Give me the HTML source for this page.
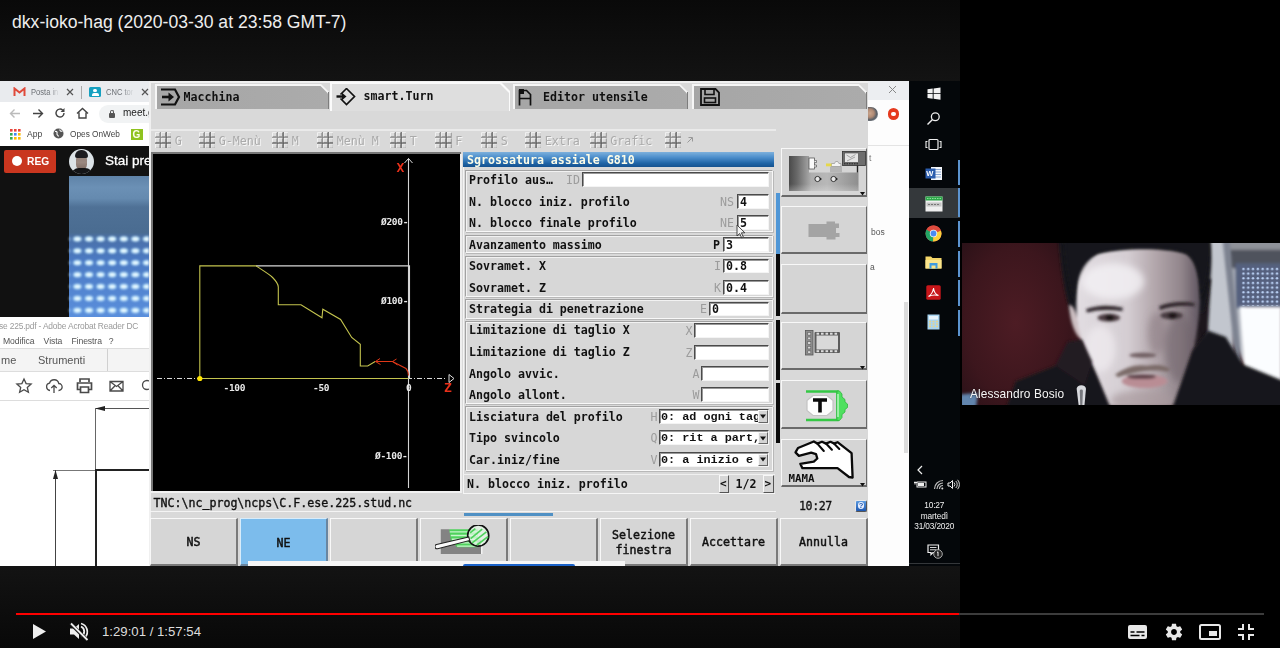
<!DOCTYPE html>
<html lang="it">
<head>
<meta charset="utf-8">
<title>dkx-ioko-hag (2020-03-30 at 23:58 GMT-7)</title>
<style>
*{box-sizing:border-box;margin:0;padding:0}
html,body{width:1280px;height:648px;overflow:hidden;background:#000}
body{position:relative;font-family:"Liberation Sans",sans-serif;color:#fff}
.abs{position:absolute}
#left{left:0;top:0;width:960px;height:648px;background:#121212}
#share{left:0;top:81px;width:960px;height:485.500px;overflow:hidden;background:#fff;filter:blur(.35px)}
.mono{font-family:"DejaVu Sans Mono","Liberation Mono",monospace;font-weight:bold;font-size:11.62px;color:#111;white-space:pre;line-height:14px}
.sans{font-family:"Liberation Sans",sans-serif;white-space:pre}
/* chrome */
#ctabs{left:0;top:0;width:149px;height:21px;background:#e9ebee}
#ctool{left:0;top:21px;width:149px;height:23px;background:#fff}
#cbook{left:0;top:44px;width:149px;height:21px;background:#fff}
#meet{left:0;top:65px;width:149px;height:171px;background:#111}
#acro{left:0;top:236px;width:149px;height:249px;background:#fff}
/* CNC */
#cnc{left:149px;top:0;width:719px;height:485px;background:#d9d9d9;border-left:2px solid #eee;border-top:2px solid #eee}
.tab{position:absolute;top:4px;height:24px;background:#a9a9a9;border-top:1px solid #f4f4f4;border-left:1px solid #f4f4f4;border-right:1px solid #777;border-radius:2px 8px 0 0}
.tab.act{background:#dedede;top:2px;height:27px;border-top:2px solid #fafafa;border-left:2px solid #fafafa}
.grp{position:absolute;left:466px;width:307px;border:1px solid #9a9a9a;border-right-color:#f6f6f6;border-bottom-color:#f6f6f6;box-shadow:inset 1px 1px 0 #f0f0f0}
.lbl{position:absolute;left:469px}
.inp{position:absolute;background:#fff;border:1px solid #555;border-right-color:#eee;border-bottom-color:#eee;height:15px;padding-left:3px}
.pl{position:absolute;color:#999;font-weight:normal}
.sk{position:absolute;top:437px;height:48px;width:88px;background:#d6d6d6;border:1px solid #f8f8f8;border-right:2px solid #888;border-bottom:2px solid #888;display:flex;align-items:center;justify-content:center;text-align:center}
.rb{position:absolute;left:781px;width:86px;background:#d6d6d6;border:1px solid #f8f8f8;border-right:2px solid #777;border-bottom:2px solid #777}
</style>
</head>
<body>
<div id="left" class="abs"></div>
<div id="share" class="abs">
<div id="ctabs" class="abs"></div><div id="ctool" class="abs"></div><div id="cbook" class="abs"></div>
<svg class="abs" style="left:13px;top:6px" width="13" height="10" viewBox="0 0 13 10"><path d="M1.500 9V1.500L6.500 5.500L11.500 1.500V9" fill="none" stroke="#e04a3a" stroke-width="2"/></svg>
<div class="abs sans" style="left:31px;top:5px;font-size:8.600px;line-height:12px;color:#6a6e73;transform:scaleX(.88);transform-origin:0 0">Posta in</div>
<div class="abs" style="left:48px;top:2px;width:12px;height:18px;background:linear-gradient(90deg,rgba(233,235,238,0),#e9ebee)"></div>
<svg class="abs" style="left:66px;top:7px" width="8" height="8" viewBox="0 0 8 8"><path d="M1 1L7 7M7 1L1 7" stroke="#555" stroke-width="1.200"/></svg>
<div class="abs" style="left:81px;top:5px;width:1px;height:13px;background:#aaa"></div>
<div class="abs" style="left:89px;top:6px;width:12px;height:10px;background:#16a0c0;border-radius:1.500px"></div>
<div class="abs" style="left:93px;top:8px;width:4px;height:3px;background:#fff;border-radius:2px"></div>
<div class="abs" style="left:91.500px;top:12px;width:7px;height:2.500px;background:#fff;border-radius:2px 2px 0 0"></div>
<div class="abs sans" style="left:106px;top:5px;font-size:8.600px;line-height:12px;color:#6a6e73;transform:scaleX(.88);transform-origin:0 0">CNC tor</div>
<div class="abs" style="left:122px;top:2px;width:12px;height:18px;background:linear-gradient(90deg,rgba(233,235,238,0),#e9ebee)"></div>
<svg class="abs" style="left:141px;top:7px" width="8" height="8" viewBox="0 0 8 8"><path d="M1 1L7 7M7 1L1 7" stroke="#555" stroke-width="1.200"/></svg>
<svg class="abs" style="left:9px;top:27px" width="12" height="11" viewBox="0 0 12 11"><path d="M11 5.500H2M5.500 1.500L1.500 5.500L5.500 9.500" fill="none" stroke="#bbb" stroke-width="1.400"/></svg>
<svg class="abs" style="left:32px;top:27px" width="12" height="11" viewBox="0 0 12 11"><path d="M1 5.500H10M6.500 1.500L10.500 5.500L6.500 9.500" fill="none" stroke="#444" stroke-width="1.400"/></svg>
<svg class="abs" style="left:54px;top:26px" width="12" height="12" viewBox="0 0 12 12"><path d="M10 6A4 4 0 1 1 8.800 3.200" fill="none" stroke="#444" stroke-width="1.400"/><path d="M10.500 1v4h-4z" fill="#444"/></svg>
<svg class="abs" style="left:76px;top:26px" width="13" height="12" viewBox="0 0 13 12"><path d="M1 6.500L6.500 1.500L12 6.500M3 5.500V11H10V5.500" fill="none" stroke="#444" stroke-width="1.400"/></svg>
<div class="abs" style="left:99px;top:24px;width:60px;height:18px;background:#f1f3f4;border-radius:9px"></div>
<div class="abs" style="left:108.500px;top:32px;width:6px;height:5px;background:#555;border-radius:1px"></div>
<div class="abs" style="left:109.500px;top:28.500px;width:4px;height:5px;border:1px solid #555;border-bottom:0;border-radius:2px 2px 0 0"></div>
<div class="abs sans" style="left:123px;top:26px;font-size:10px;line-height:12px;color:#222">meet.g</div>
<svg class="abs" style="left:10px;top:48px" width="11" height="11" viewBox="0 0 11 11"><g><rect x="0" y="0" width="2.600" height="2.600" fill="#e8453c"/><rect x="4" y="0" width="2.600" height="2.600" fill="#e8453c"/><rect x="8" y="0" width="2.600" height="2.600" fill="#e8453c"/><rect x="0" y="4" width="2.600" height="2.600" fill="#34a853"/><rect x="4" y="4" width="2.600" height="2.600" fill="#4285f4"/><rect x="8" y="4" width="2.600" height="2.600" fill="#fbbc05"/><rect x="0" y="8" width="2.600" height="2.600" fill="#34a853"/><rect x="4" y="8" width="2.600" height="2.600" fill="#fbbc05"/><rect x="8" y="8" width="2.600" height="2.600" fill="#fbbc05"/></g></svg>
<div class="abs sans" style="left:27px;top:47px;font-size:9.200px;line-height:12px;color:#444;transform:scaleX(.93);transform-origin:0 0">App</div>
<svg class="abs" style="left:53px;top:47px" width="11" height="11" viewBox="0 0 11 11"><circle cx="5.500" cy="5.500" r="5" fill="#555"/><path d="M2 3.500c1.500-.5 2.500.5 2 2s1 1.500 1.500 3M7 1.500c-.5 1.500 1 2 2.500 1.500" stroke="#fff" stroke-width="1.100" fill="none"/></svg>
<div class="abs sans" style="left:70px;top:47px;font-size:9.200px;line-height:12px;color:#444;transform:scaleX(.9);transform-origin:0 0">Opes OnWeb</div>
<div class="abs" style="left:131px;top:48px;width:12px;height:11px;background:#8fc31f"></div>
<div class="abs sans" style="left:132.500px;top:47.500px;font-size:10px;line-height:12px;color:#ffe;font-weight:bold">G</div>

<div id="meet" class="abs"></div>
<div class="abs" style="left:4px;top:69px;width:52px;height:23px;background:#c9361f;border-radius:2px"></div>
<div class="abs" style="left:12px;top:75px;width:10px;height:10px;background:#fff;border-radius:5px"></div>
<div class="abs sans" style="left:27px;top:74px;font-size:11px;line-height:13px;font-weight:bold;color:#fff;transform:scaleX(.93);transform-origin:0 0">REG</div>
<div class="abs" style="left:68.500px;top:67.500px;width:25.500px;height:25.500px;border-radius:13px;background:#dce3e7;overflow:hidden;filter:blur(.3px)"><div class="abs" style="left:7.500px;top:6px;width:10.500px;height:15px;border-radius:5px 5px 6px 6px;background:linear-gradient(#8f7f78,#9a8880 50%,#7c6a62)"></div><div class="abs" style="left:6.200px;top:1.500px;width:13.500px;height:7.500px;border-radius:6px 6px 2px 2px;background:#1b1c20"></div><div class="abs" style="left:2px;top:19.500px;width:22px;height:8px;border-radius:8px 8px 0 0;background:#141416"></div></div>
<div class="abs sans" style="left:105px;top:72px;font-size:13.500px;line-height:16px;color:#fff;-webkit-text-stroke:.3px #fff">Stai pre</div>
<div class="abs" style="left:69px;top:95px;width:80px;height:140.500px;background:linear-gradient(#5f83a8 0,#6b90b5 8%,#658aaf 16%,#4f7196 22%,#4a6c91 40%,#4a70a8 44%,#4b7ac4 60%,#5a8fdc 100%)"></div>
<svg class="abs" style="left:69px;top:150px;filter:blur(.9px)" width="80" height="86" viewBox="0 0 80 86"><defs><pattern id="dots" x="2.600" y="2" width="11.600" height="11.900" patternUnits="userSpaceOnUse"><ellipse cx="5.800" cy="6" rx="4.200" ry="2.700" fill="#c4ecff"/><ellipse cx="5.800" cy="6" rx="2.400" ry="1.600" fill="#f2fcff"/></pattern></defs><rect x="0" y="2" width="80" height="83.300" fill="url(#dots)"/></svg>

<div id="acro" class="abs"></div>
<div class="abs sans" style="left:-1px;top:239px;font-size:9.200px;line-height:12px;color:#9a9a9a;letter-spacing:-.2px;transform:scaleX(.915);transform-origin:0 0">se 225.pdf - Adobe Acrobat Reader DC</div>
<div class="abs sans" style="left:3px;top:254px;font-size:9px;line-height:12px;color:#555;letter-spacing:-.1px;transform:scaleX(.96);transform-origin:0 0">Modifica    Vista    Finestra   ?</div>
<div class="abs" style="left:0;top:267px;width:149px;height:24px;background:#f4f4f4;border-top:1px solid #ddd;border-bottom:1px solid #ddd"></div>
<div class="abs" style="left:107px;top:268px;width:1px;height:22px;background:#d0d0d0"></div>
<div class="abs sans" style="left:1px;top:272px;font-size:11px;line-height:14px;color:#555">me</div>
<div class="abs sans" style="left:38px;top:272px;font-size:11px;line-height:14px;color:#555">Strumenti</div>
<svg class="abs" style="left:14px;top:294px" width="135" height="22" viewBox="0 0 135 22"><g fill="none" stroke="#4a4a4a" stroke-width="1.300"><path d="M10 4l2.100 4.600 5 .5-3.800 3.300 1.100 4.900L10 14.800 5.600 17.300l1.100-4.900L2.900 9.100l5-.5z"/><path d="M36 15.500a3.700 3.700 0 0 1-.5-7.300 4.800 4.800 0 0 1 9.300.3 3.500 3.500 0 0 1-.3 7M40 18v-7.500M37.300 13L40 10.300 42.700 13"/><path d="M66 7V4h9v3M66 14.500h-2.500V8h14v6.500H75M66.500 12h8v5.500h-8z" stroke-width="1.700"/><path d="M96 6.500h13v9.500H96zM96 6.500l6.500 5 6.500-5M96 16l4.800-5M109 16l-4.800-5"/><circle cx="133" cy="10" r="4.500"/></g></svg>
<div class="abs" style="left:0;top:319px;width:149px;height:1px;background:#ddd"></div>
<div class="abs" style="left:95px;top:327px;width:54px;height:1px;background:#555"></div>
<svg class="abs" style="left:95px;top:324px" width="12" height="7" viewBox="0 0 12 7"><path d="M0 3.500L10 1V6z" fill="#222"/></svg>
<div class="abs" style="left:95px;top:327px;width:1px;height:62px;background:#666"></div>
<div class="abs" style="left:53px;top:388.500px;width:42px;height:1px;background:#777"></div>
<div class="abs" style="left:95px;top:388px;width:54px;height:2px;background:#222"></div>
<div class="abs" style="left:94.500px;top:389px;width:2px;height:96px;background:#222"></div>
<div class="abs" style="left:55px;top:389px;width:1px;height:96px;background:#444"></div>
<svg class="abs" style="left:52px;top:389px" width="7" height="12" viewBox="0 0 7 12"><path d="M3.500 0L6 9H1z" fill="#222"/></svg>

<div class="abs" style="left:149px;top:0px;width:719px;height:485px;background:#d9d9d9;border-left:2px solid #f0f0f0;border-top:2px solid #f0f0f0"></div>
<div class="abs" style="left:155px;top:3px;width:174px;height:25px;background:#f6f6f6;clip-path:polygon(0 0,calc(100% - 8px) 0,100% 8px,100% 100%,0 100%)"></div>
<div class="abs" style="left:156.5px;top:4.5px;width:171.5px;height:23.5px;background:linear-gradient(90deg,#a6a6a6,#ababab);clip-path:polygon(0 0,calc(100% - 8px) 0,100% 8px,100% 100%,0 100%)"></div>
<div class="abs" style="left:327.5px;top:11px;width:1px;height:17px;background:#7d7d7d"></div>
<div class="abs" style="left:330px;top:1px;width:180px;height:29px;background:#fbfbfb;clip-path:polygon(0 0,calc(100% - 9px) 0,100% 9px,100% 100%,0 100%)"></div>
<div class="abs" style="left:332px;top:3px;width:177px;height:27px;background:#dedede;clip-path:polygon(0 0,calc(100% - 9px) 0,100% 9px,100% 100%,0 100%)"></div>
<div class="abs" style="left:513px;top:3px;width:175px;height:25px;background:#f6f6f6;clip-path:polygon(0 0,calc(100% - 8px) 0,100% 8px,100% 100%,0 100%)"></div>
<div class="abs" style="left:514.5px;top:4.5px;width:172.5px;height:23.5px;background:linear-gradient(90deg,#a6a6a6,#ababab);clip-path:polygon(0 0,calc(100% - 8px) 0,100% 8px,100% 100%,0 100%)"></div>
<div class="abs" style="left:686.5px;top:11px;width:1px;height:17px;background:#7d7d7d"></div>
<div class="abs" style="left:692px;top:3px;width:175px;height:25px;background:#f6f6f6;clip-path:polygon(0 0,calc(100% - 8px) 0,100% 8px,100% 100%,0 100%)"></div>
<div class="abs" style="left:693.5px;top:4.5px;width:172.5px;height:23.5px;background:linear-gradient(90deg,#a6a6a6,#ababab);clip-path:polygon(0 0,calc(100% - 8px) 0,100% 8px,100% 100%,0 100%)"></div>
<div class="abs" style="left:865.5px;top:11px;width:1px;height:17px;background:#7d7d7d"></div>
<svg class="abs" style="left:159px;top:6px;" width="23" height="20" viewBox="0 0 23 20"><path d="M2 2.500h14l4 7.500-4 7.500H2" fill="none" stroke="#111" stroke-width="2.200"/><path d="M3 10h8" stroke="#111" stroke-width="2.600"/><path d="M9.500 5.500L15 10l-5.500 4.500z" fill="#111"/></svg>
<div class="abs mono" style="left:183.5px;top:9px;">Macchina</div>
<svg class="abs" style="left:335px;top:5px;" width="22" height="22" viewBox="0 0 22 22"><path d="M11.500 2.500L19.500 10.500L11.500 18.500L5.500 12.500M5.500 8.500L11.500 2.500" fill="none" stroke="#111" stroke-width="1.700"/><path d="M1.500 10.500h7" stroke="#111" stroke-width="2.400"/><path d="M7 6.800L11.500 10.500L7 14.200z" fill="#111"/></svg>
<div class="abs mono" style="left:363.5px;top:8px;">smart.Turn</div>
<svg class="abs" style="left:517px;top:6px;" width="16" height="20" viewBox="0 0 16 20"><path d="M2.500 18.500V3.500h7l4 4v11M2.500 11.500h11" fill="none" stroke="#111" stroke-width="1.700"/><path d="M2 2h5v5H2z" fill="#111"/></svg>
<div class="abs mono" style="left:543px;top:9px;">Editor utensile</div>
<svg class="abs" style="left:699px;top:6px;" width="22" height="20" viewBox="0 0 22 20"><path d="M2 2h14.500l3.500 3.500V18H2z" fill="none" stroke="#111" stroke-width="1.800"/><path d="M6 2.500v5h9v-5" fill="none" stroke="#111" stroke-width="1.600"/><rect x="5.500" y="11" width="11" height="4.500" fill="none" stroke="#111" stroke-width="1.600"/></svg>
<div class="abs" style="left:151px;top:48px;width:625px;height:1.5px;background:#eaeaea"></div>
<svg width="0" height="0" style="position:absolute"><defs><g id="grid"><rect x="0" y="0" width="17" height="17" fill="#c4c4c4"/><rect x="0.4" y="0.4" width="4.400" height="4.400" fill="#dcdcdc"/><path d="M0.4 4.8V0.4H4.8" fill="none" stroke="#f6f6f6" stroke-width=".9"/><path d="M4.8 0.9V4.8H0.9" fill="none" stroke="#909090" stroke-width=".9"/><rect x="6.3" y="0.4" width="4.400" height="4.400" fill="#dcdcdc"/><path d="M6.3 4.8V0.4H10.7" fill="none" stroke="#f6f6f6" stroke-width=".9"/><path d="M10.7 0.9V4.8H6.8" fill="none" stroke="#909090" stroke-width=".9"/><rect x="12.2" y="0.4" width="4.400" height="4.400" fill="#dcdcdc"/><path d="M12.2 4.8V0.4H16.6" fill="none" stroke="#f6f6f6" stroke-width=".9"/><path d="M16.6 0.9V4.8H12.7" fill="none" stroke="#909090" stroke-width=".9"/><rect x="0.4" y="6.3" width="4.400" height="4.400" fill="#dcdcdc"/><path d="M0.4 10.7V6.3H4.8" fill="none" stroke="#f6f6f6" stroke-width=".9"/><path d="M4.8 6.8V10.7H0.9" fill="none" stroke="#909090" stroke-width=".9"/><rect x="6.3" y="6.3" width="4.400" height="4.400" fill="#dcdcdc"/><path d="M6.3 10.7V6.3H10.7" fill="none" stroke="#f6f6f6" stroke-width=".9"/><path d="M10.7 6.8V10.7H6.8" fill="none" stroke="#909090" stroke-width=".9"/><rect x="12.2" y="6.3" width="4.400" height="4.400" fill="#dcdcdc"/><path d="M12.2 10.7V6.3H16.6" fill="none" stroke="#f6f6f6" stroke-width=".9"/><path d="M16.6 6.8V10.7H12.7" fill="none" stroke="#909090" stroke-width=".9"/><rect x="0.4" y="12.2" width="4.400" height="4.400" fill="#dcdcdc"/><path d="M0.4 16.6V12.2H4.8" fill="none" stroke="#f6f6f6" stroke-width=".9"/><path d="M4.8 12.7V16.6H0.9" fill="none" stroke="#909090" stroke-width=".9"/><rect x="6.3" y="12.2" width="4.400" height="4.400" fill="#dcdcdc"/><path d="M6.3 16.6V12.2H10.7" fill="none" stroke="#f6f6f6" stroke-width=".9"/><path d="M10.7 12.7V16.6H6.8" fill="none" stroke="#909090" stroke-width=".9"/><rect x="12.2" y="12.2" width="4.400" height="4.400" fill="#dcdcdc"/><path d="M12.2 16.6V12.2H16.6" fill="none" stroke="#f6f6f6" stroke-width=".9"/><path d="M16.6 12.7V16.6H12.7" fill="none" stroke="#909090" stroke-width=".9"/><path d="M5.500 0v17M0 5.500h17" stroke="#8c8c8c" stroke-width=".9"/><path d="M11.400 0v17M0 11.400h17" stroke="#555" stroke-width="1"/></g></defs></svg>
<svg class="abs" style="left:154.5px;top:50.8px;" width="16.8" height="16.6" viewBox="0 0 17 17"><use href="#grid"/></svg>
<div class="abs mono" style="left:174.7px;top:53px;color:#aaa;font-weight:normal;text-shadow:1px 1px 0 #f6f6f6">G</div>
<svg class="abs" style="left:198.5px;top:50.8px;" width="16.8" height="16.6" viewBox="0 0 17 17"><use href="#grid"/></svg>
<div class="abs mono" style="left:218.7px;top:53px;color:#aaa;font-weight:normal;text-shadow:1px 1px 0 #f6f6f6">G-Menù</div>
<svg class="abs" style="left:271.5px;top:50.8px;" width="16.8" height="16.6" viewBox="0 0 17 17"><use href="#grid"/></svg>
<div class="abs mono" style="left:291.7px;top:53px;color:#aaa;font-weight:normal;text-shadow:1px 1px 0 #f6f6f6">M</div>
<svg class="abs" style="left:316.5px;top:50.8px;" width="16.8" height="16.6" viewBox="0 0 17 17"><use href="#grid"/></svg>
<div class="abs mono" style="left:336.7px;top:53px;color:#aaa;font-weight:normal;text-shadow:1px 1px 0 #f6f6f6">Menù M</div>
<svg class="abs" style="left:389.5px;top:50.8px;" width="16.8" height="16.6" viewBox="0 0 17 17"><use href="#grid"/></svg>
<div class="abs mono" style="left:409.7px;top:53px;color:#aaa;font-weight:normal;text-shadow:1px 1px 0 #f6f6f6">T</div>
<svg class="abs" style="left:435px;top:50.8px;" width="16.8" height="16.6" viewBox="0 0 17 17"><use href="#grid"/></svg>
<div class="abs mono" style="left:455.2px;top:53px;color:#aaa;font-weight:normal;text-shadow:1px 1px 0 #f6f6f6">F</div>
<svg class="abs" style="left:480.5px;top:50.8px;" width="16.8" height="16.6" viewBox="0 0 17 17"><use href="#grid"/></svg>
<div class="abs mono" style="left:500.7px;top:53px;color:#aaa;font-weight:normal;text-shadow:1px 1px 0 #f6f6f6">S</div>
<svg class="abs" style="left:524.5px;top:50.8px;" width="16.8" height="16.6" viewBox="0 0 17 17"><use href="#grid"/></svg>
<div class="abs mono" style="left:544.7px;top:53px;color:#aaa;font-weight:normal;text-shadow:1px 1px 0 #f6f6f6">Extra</div>
<svg class="abs" style="left:590px;top:50.8px;" width="16.8" height="16.6" viewBox="0 0 17 17"><use href="#grid"/></svg>
<div class="abs mono" style="left:610.2px;top:53px;color:#aaa;font-weight:normal;text-shadow:1px 1px 0 #f6f6f6">Grafic</div>
<svg class="abs" style="left:664.5px;top:50.8px;" width="16.8" height="16.6" viewBox="0 0 17 17"><use href="#grid"/></svg>
<svg class="abs" style="left:686px;top:55px;" width="8" height="8" viewBox="0 0 8 8"><path d="M1.500 6.500L6 2M2.500 1.500H6.500V5.500" fill="none" stroke="#999" stroke-width="1"/></svg>
<div class="abs" style="left:151px;top:71px;width:310px;height:341px;background:#777"></div>
<div class="abs" style="left:153px;top:73px;width:307px;height:337px;background:#000"></div>
<div class="abs" style="left:460px;top:73px;width:1.5px;height:339px;background:#eee"></div>
<div class="abs" style="left:151px;top:410px;width:310px;height:2px;background:#f2f2f2"></div>
<svg class="abs" style="left:153px;top:73px;filter:blur(.3px)" width="307" height="337" viewBox="0 0 307 337"><path d="M255.500 4.500V334" stroke="#d4d4d4" stroke-width="1.100"/><path d="M251.500 9L255.500 4.500L259.500 9" fill="none" stroke="#ddd" stroke-width="1"/><path d="M4 224.500H292" stroke="#ddd" stroke-width="1" stroke-dasharray="5 2 1 2"/><path d="M296 220.500l5 4-5 4z" fill="none" stroke="#ddd" stroke-width="1"/><path d="M103 111.900H256.500V224" fill="none" stroke="#d8d8d8" stroke-width="1.100"/><path d="M255.500 224.500H46.800V111.900H103C110 116.500 116 120 119.600 123.500C123 127 125.300 131 125.300 133V150.700H148L169 163.800L169.800 155.200L187.600 165.500L198.700 183.500L207.300 190.300V212H214.700L222.200 207.500" fill="none" stroke="#c4c44e" stroke-width="1.100"/><path d="M222.200 207.500H239.500L253 214.500Q255.500 217 255.500 221.500" fill="none" stroke="#e03818" stroke-width="1.100"/><path d="M227 204.500L222.500 207.500L227.500 210.500M243.500 205L239.500 207.500L244.500 211" fill="none" stroke="#e03818" stroke-width="1"/><circle cx="46.800" cy="224.500" r="2.600" fill="#ffe400"/></svg>
<div class="abs mono" style="left:381px;top:134px;color:#e8e8e8;font-size:9.500px;font-weight:bold;letter-spacing:-.3px">Ø200-</div>
<div class="abs mono" style="left:381px;top:212.5px;color:#e8e8e8;font-size:9.500px;font-weight:bold;letter-spacing:-.3px">Ø100-</div>
<div class="abs mono" style="left:375px;top:368px;color:#e8e8e8;font-size:9.500px;font-weight:bold;letter-spacing:-.3px">Ø-100-</div>
<div class="abs mono" style="left:223.5px;top:299.5px;color:#e8e8e8;font-size:9.500px;font-weight:bold;letter-spacing:-.3px">-100</div>
<div class="abs mono" style="left:313px;top:299.5px;color:#e8e8e8;font-size:9.500px;font-weight:bold;letter-spacing:-.3px">-50</div>
<div class="abs mono" style="left:406px;top:299.5px;color:#e8e8e8;font-size:9.500px;font-weight:bold;letter-spacing:-.3px">0</div>
<div class="abs mono" style="left:396.5px;top:80px;color:#e8301a;font-size:13px">X</div>
<div class="abs mono" style="left:444px;top:300px;color:#e8301a;font-size:13px">Z</div>
<!--CNC2-->
<div class="abs" style="left:463px;top:71px;width:311px;height:15px;background:linear-gradient(#7db0dc 0,#4d8fcc 35%,#1f64a6 75%,#15528f 100%)"></div>
<div class="abs mono" style="left:467px;top:71.5px;color:#fdfde8">Sgrossatura assiale G810</div>
<div class="abs" style="left:463px;top:86px;width:312px;height:327px;border-left:1px solid #f4f4f4"></div>
<div class="abs" style="left:465px;top:88.5px;width:308px;height:62.5px;border:1px solid #a2a2a2;border-right-color:#f8f8f8;border-bottom-color:#f8f8f8;box-shadow:inset 1px 1px 0 #f2f2f2,1px 1px 0 #b8b8b8;background:#d7d7d7"></div>
<div class="abs" style="left:465px;top:153.5px;width:308px;height:18px;border:1px solid #a2a2a2;border-right-color:#f8f8f8;border-bottom-color:#f8f8f8;box-shadow:inset 1px 1px 0 #f2f2f2,1px 1px 0 #b8b8b8;background:#d7d7d7"></div>
<div class="abs" style="left:465px;top:175px;width:308px;height:40.5px;border:1px solid #a2a2a2;border-right-color:#f8f8f8;border-bottom-color:#f8f8f8;box-shadow:inset 1px 1px 0 #f2f2f2,1px 1px 0 #b8b8b8;background:#d7d7d7"></div>
<div class="abs" style="left:465px;top:218px;width:308px;height:19.5px;border:1px solid #a2a2a2;border-right-color:#f8f8f8;border-bottom-color:#f8f8f8;box-shadow:inset 1px 1px 0 #f2f2f2,1px 1px 0 #b8b8b8;background:#d7d7d7"></div>
<div class="abs" style="left:465px;top:239.5px;width:308px;height:83.5px;border:1px solid #a2a2a2;border-right-color:#f8f8f8;border-bottom-color:#f8f8f8;box-shadow:inset 1px 1px 0 #f2f2f2,1px 1px 0 #b8b8b8;background:#d7d7d7"></div>
<div class="abs" style="left:465px;top:325px;width:308px;height:64.5px;border:1px solid #a2a2a2;border-right-color:#f8f8f8;border-bottom-color:#f8f8f8;box-shadow:inset 1px 1px 0 #f2f2f2,1px 1px 0 #b8b8b8;background:#d7d7d7"></div>
<div class="abs mono" style="left:469px;top:92px;">Profilo aus…</div>
<div class="abs mono" style="left:469px;top:113.5px;">N. blocco iniz. profilo</div>
<div class="abs mono" style="left:469px;top:135px;">N. blocco finale profilo</div>
<div class="abs mono" style="left:469px;top:156.5px;">Avanzamento massimo</div>
<div class="abs mono" style="left:469px;top:178px;">Sovramet. X</div>
<div class="abs mono" style="left:469px;top:199.5px;">Sovramet. Z</div>
<div class="abs mono" style="left:469px;top:220.5px;">Strategia di penetrazione</div>
<div class="abs mono" style="left:469px;top:242px;">Limitazione di taglio X</div>
<div class="abs mono" style="left:469px;top:264px;">Limitazione di taglio Z</div>
<div class="abs mono" style="left:469px;top:285.5px;">Angolo avvic.</div>
<div class="abs mono" style="left:469px;top:306.5px;">Angolo allont.</div>
<div class="abs mono" style="left:469px;top:328.5px;">Lisciatura del profilo</div>
<div class="abs mono" style="left:469px;top:350px;">Tipo svincolo</div>
<div class="abs mono" style="left:469px;top:371.5px;">Car.iniz/fine</div>
<div class="abs" style="left:581.5px;top:90.5px;width:187.5px;height:15.5px;background:#fff;border:1px solid #4a4a4a;border-right:1px solid #f4f4f4;border-bottom:1px solid #f4f4f4;box-shadow:inset 1px 1px 0 #999"></div>
<div class="abs mono" style="left:566px;top:91.75px;color:#9c9c9c;font-weight:normal">ID</div>
<div class="abs" style="left:736.5px;top:113px;width:32.5px;height:14.5px;background:#fff;border:1px solid #4a4a4a;border-right:1px solid #f4f4f4;border-bottom:1px solid #f4f4f4;box-shadow:inset 1px 1px 0 #999"></div>
<div class="abs mono" style="left:740px;top:113.75px;">4</div>
<div class="abs mono" style="left:720px;top:113.75px;color:#9c9c9c;font-weight:normal">NS</div>
<div class="abs" style="left:736.5px;top:134px;width:32.5px;height:15px;background:#fff;border:1px solid #4a4a4a;border-right:1px solid #f4f4f4;border-bottom:1px solid #f4f4f4;box-shadow:inset 1px 1px 0 #999"></div>
<div class="abs mono" style="left:740px;top:135px;">5</div>
<div class="abs mono" style="left:720px;top:135px;color:#9c9c9c;font-weight:normal">NE</div>
<div class="abs" style="left:722.5px;top:155.5px;width:46.5px;height:15.5px;background:#fff;border:1px solid #4a4a4a;border-right:1px solid #f4f4f4;border-bottom:1px solid #f4f4f4;box-shadow:inset 1px 1px 0 #999"></div>
<div class="abs mono" style="left:726px;top:156.75px;">3</div>
<div class="abs mono" style="left:713px;top:156.75px;color:#111">P</div>
<div class="abs" style="left:722.5px;top:177.5px;width:46.5px;height:14.5px;background:#fff;border:1px solid #4a4a4a;border-right:1px solid #f4f4f4;border-bottom:1px solid #f4f4f4;box-shadow:inset 1px 1px 0 #999"></div>
<div class="abs mono" style="left:726px;top:178.25px;">0.8</div>
<div class="abs mono" style="left:714px;top:178.25px;color:#9c9c9c;font-weight:normal">I</div>
<div class="abs" style="left:722.5px;top:199px;width:46.5px;height:14.5px;background:#fff;border:1px solid #4a4a4a;border-right:1px solid #f4f4f4;border-bottom:1px solid #f4f4f4;box-shadow:inset 1px 1px 0 #999"></div>
<div class="abs mono" style="left:726px;top:199.75px;">0.4</div>
<div class="abs mono" style="left:714px;top:199.75px;color:#9c9c9c;font-weight:normal">K</div>
<div class="abs" style="left:708.5px;top:220.5px;width:60.5px;height:14.5px;background:#fff;border:1px solid #4a4a4a;border-right:1px solid #f4f4f4;border-bottom:1px solid #f4f4f4;box-shadow:inset 1px 1px 0 #999"></div>
<div class="abs mono" style="left:712px;top:221.25px;">0</div>
<div class="abs mono" style="left:700px;top:221.25px;color:#9c9c9c;font-weight:normal">E</div>
<div class="abs" style="left:694px;top:242px;width:75px;height:14.5px;background:#fff;border:1px solid #4a4a4a;border-right:1px solid #f4f4f4;border-bottom:1px solid #f4f4f4;box-shadow:inset 1px 1px 0 #999"></div>
<div class="abs mono" style="left:685.5px;top:242.75px;color:#9c9c9c;font-weight:normal">X</div>
<div class="abs" style="left:694px;top:263.5px;width:75px;height:15px;background:#fff;border:1px solid #4a4a4a;border-right:1px solid #f4f4f4;border-bottom:1px solid #f4f4f4;box-shadow:inset 1px 1px 0 #999"></div>
<div class="abs mono" style="left:685.5px;top:264.5px;color:#9c9c9c;font-weight:normal">Z</div>
<div class="abs" style="left:701px;top:285px;width:68px;height:15px;background:#fff;border:1px solid #4a4a4a;border-right:1px solid #f4f4f4;border-bottom:1px solid #f4f4f4;box-shadow:inset 1px 1px 0 #999"></div>
<div class="abs mono" style="left:692.5px;top:286px;color:#9c9c9c;font-weight:normal">A</div>
<div class="abs" style="left:701px;top:306px;width:68px;height:14.5px;background:#fff;border:1px solid #4a4a4a;border-right:1px solid #f4f4f4;border-bottom:1px solid #f4f4f4;box-shadow:inset 1px 1px 0 #999"></div>
<div class="abs mono" style="left:692.5px;top:306.75px;color:#9c9c9c;font-weight:normal">W</div>
<div class="abs" style="left:659px;top:327.5px;width:110px;height:15.5px;background:#fff;border:1px solid #4a4a4a;border-right:1px solid #f4f4f4;border-bottom:1px solid #f4f4f4;box-shadow:inset 1px 1px 0 #999;overflow:hidden"></div>
<div class="abs" style="left:661px;top:328.5px;width:97px;height:13.5px;overflow:hidden"><div class="mono" style="position:absolute;left:0;top:0.25px;font-family:'Liberation Mono',monospace;font-size:11.8px">0: ad ogni taglio</div></div>
<div class="abs" style="left:757.5px;top:329px;width:10.5px;height:13px;background:#d4d4d4;border:1px solid #f8f8f8;border-right-color:#666;border-bottom-color:#666"></div>
<svg class="abs" style="left:759.5px;top:333.25px;" width="6" height="5" viewBox="0 0 6 5"><path d="M0 .5h6l-3 4z" fill="#111"/></svg>
<div class="abs mono" style="left:650.5px;top:328.75px;color:#9c9c9c;font-weight:normal">H</div>
<div class="abs" style="left:659px;top:349px;width:110px;height:15px;background:#fff;border:1px solid #4a4a4a;border-right:1px solid #f4f4f4;border-bottom:1px solid #f4f4f4;box-shadow:inset 1px 1px 0 #999;overflow:hidden"></div>
<div class="abs" style="left:661px;top:350px;width:97px;height:13px;overflow:hidden"><div class="mono" style="position:absolute;left:0;top:0px;font-family:'Liberation Mono',monospace;font-size:11.8px">0: rit a part, da</div></div>
<div class="abs" style="left:757.5px;top:350.5px;width:10.5px;height:12.5px;background:#d4d4d4;border:1px solid #f8f8f8;border-right-color:#666;border-bottom-color:#666"></div>
<svg class="abs" style="left:759.5px;top:354.5px;" width="6" height="5" viewBox="0 0 6 5"><path d="M0 .5h6l-3 4z" fill="#111"/></svg>
<div class="abs mono" style="left:650.5px;top:350px;color:#9c9c9c;font-weight:normal">Q</div>
<div class="abs" style="left:659px;top:371px;width:110px;height:14.5px;background:#fff;border:1px solid #4a4a4a;border-right:1px solid #f4f4f4;border-bottom:1px solid #f4f4f4;box-shadow:inset 1px 1px 0 #999;overflow:hidden"></div>
<div class="abs" style="left:661px;top:372px;width:97px;height:12.5px;overflow:hidden"><div class="mono" style="position:absolute;left:0;top:-0.25px;font-family:'Liberation Mono',monospace;font-size:11.8px">0: a inizio e fine</div></div>
<div class="abs" style="left:757.5px;top:372.5px;width:10.5px;height:12px;background:#d4d4d4;border:1px solid #f8f8f8;border-right-color:#666;border-bottom-color:#666"></div>
<svg class="abs" style="left:759.5px;top:376.25px;" width="6" height="5" viewBox="0 0 6 5"><path d="M0 .5h6l-3 4z" fill="#111"/></svg>
<div class="abs mono" style="left:650.5px;top:371.75px;color:#9c9c9c;font-weight:normal">V</div>
<div class="abs" style="left:463px;top:393px;width:312px;height:20px;border-bottom:1.500px solid #f6f6f6;border-top:1px solid #f0f0f0"></div>
<div class="abs mono" style="left:467px;top:396px;">N. blocco iniz. profilo</div>
<div class="abs" style="left:718.5px;top:394px;width:10px;height:17.5px;background:#d6d6d6;border:1px solid #f8f8f8;border-right:1.500px solid #555;border-bottom:1.500px solid #555"></div>
<div class="abs mono" style="left:720px;top:396px;font-size:11px">&lt;</div>
<div class="abs" style="left:763px;top:394px;width:10.5px;height:17.5px;background:#d6d6d6;border:1px solid #f8f8f8;border-right:1.500px solid #555;border-bottom:1.500px solid #555"></div>
<div class="abs mono" style="left:764.5px;top:396px;font-size:11px">&gt;</div>
<div class="abs mono" style="left:735.5px;top:396px;">1/2</div>
<svg class="abs" style="left:736px;top:143px;" width="9" height="15" viewBox="0 0 9 15"><path d="M1 1v11l2.700-2.500 2 4.500 1.700-.8-2-4.400h3.500z" fill="#f4f4f4" stroke="#333" stroke-width=".9"/></svg>
<div class="abs" style="left:776px;top:112px;width:3.5px;height:61px;background:#4f96d6"></div>
<div class="abs" style="left:776px;top:173px;width:3.5px;height:62px;background:#0a0a0a"></div>
<div class="abs" style="left:776px;top:238.5px;width:3.5px;height:60.5px;background:#0a0a0a"></div>
<div class="abs" style="left:776px;top:302px;width:3.5px;height:60px;background:#0a0a0a"></div>
<div class="abs" style="left:150px;top:413.5px;width:626px;height:17.5px;border-bottom:1.500px solid #f4f4f4"></div>
<div class="abs mono" style="left:153.5px;top:415px;font-weight:normal;-webkit-text-stroke:.35px #111">TNC:\nc_prog\ncps\C.F.ese.225.stud.nc</div>
<div class="abs mono" style="left:799px;top:418px;font-weight:normal;-webkit-text-stroke:.3px #111;letter-spacing:-.4px">10:27</div>
<div class="abs" style="left:855px;top:419px;width:11.5px;height:12px;background:linear-gradient(#5d9be0,#1d57b0);border-radius:2px;border:1px solid #e8e8e8;border-right-color:#555;border-bottom-color:#555"></div>
<div class="abs" style="left:857.5px;top:421px;width:6.5px;height:7px;background:#e8f0ff;border-radius:4px"></div>
<div class="abs mono" style="left:858.7px;top:417.5px;font-family:'Liberation Sans',sans-serif;font-size:7.500px;color:#1d57b0">?</div>
<div class="abs" style="left:464px;top:432px;width:89px;height:3px;background:#4f90c4"></div>
<div class="abs" style="left:780.5px;top:67px;width:86.5px;height:48.5px;background:#d5d5d5;border:1.500px solid #f8f8f8;border-right:1.500px solid #6a6a6a;border-bottom:2px solid #6a6a6a"></div>
<div class="abs" style="left:780.5px;top:125px;width:86.5px;height:48px;background:#d5d5d5;border:1.500px solid #f8f8f8;border-right:1.500px solid #6a6a6a;border-bottom:2px solid #6a6a6a"></div>
<div class="abs" style="left:780.5px;top:183px;width:86.5px;height:50px;background:#d5d5d5;border:1.500px solid #f8f8f8;border-right:1.500px solid #6a6a6a;border-bottom:2px solid #6a6a6a"></div>
<div class="abs" style="left:780.5px;top:241px;width:86.5px;height:48px;background:#d5d5d5;border:1.500px solid #f8f8f8;border-right:1.500px solid #6a6a6a;border-bottom:2px solid #6a6a6a"></div>
<div class="abs" style="left:780.5px;top:299px;width:86.5px;height:49px;background:#d5d5d5;border:1.500px solid #f8f8f8;border-right:1.500px solid #6a6a6a;border-bottom:2px solid #6a6a6a"></div>
<div class="abs" style="left:780.5px;top:358px;width:86.5px;height:48px;background:#d5d5d5;border:1.500px solid #f8f8f8;border-right:1.500px solid #6a6a6a;border-bottom:2px solid #6a6a6a"></div>
<svg class="abs" style="left:860px;top:111px;" width="5" height="4" viewBox="0 0 5 4"><path d="M0 0h5l-2.500 3.500z" fill="#111"/></svg>
<svg class="abs" style="left:860px;top:284.5px;" width="5" height="4" viewBox="0 0 5 4"><path d="M0 0h5l-2.500 3.500z" fill="#111"/></svg>
<svg class="abs" style="left:860px;top:401.5px;" width="5" height="4" viewBox="0 0 5 4"><path d="M0 0h5l-2.500 3.500z" fill="#111"/></svg>
<svg class="abs" style="left:787px;top:68.5px;filter:blur(.3px)" width="80" height="44" viewBox="0 0 80 44"><defs><linearGradient id="mg" x1="0" x2="1" y1="0" y2="0"><stop offset="0" stop-color="#4a4a4a"/><stop offset=".12" stop-color="#6a6a6a"/><stop offset=".32" stop-color="#aeaeae"/><stop offset=".55" stop-color="#b8b8b8"/><stop offset="1" stop-color="#8e8e8e"/></linearGradient><linearGradient id="mg2" x1="0" x2="0" y1="0" y2="1"><stop offset="0" stop-color="#fff" stop-opacity="0"/><stop offset=".8" stop-color="#fff" stop-opacity="0"/><stop offset="1" stop-color="#fff" stop-opacity=".25"/></linearGradient></defs><path d="M2 6h20v16.500h49.500V41H2z" fill="url(#mg)"/><path d="M2 6h20v16.500h49.500V41H2z" fill="url(#mg2)"/><rect x="22" y="8" width="5.500" height="11" fill="#fafafa" stroke="#444" stroke-width=".7"/><path d="M27.500 10.500h2v2h-2M27.500 15h2v2h-2" fill="#eee" stroke="#444" stroke-width=".6"/><rect x="43" y="16.500" width="12" height="6" fill="#b5b5b5"/><path d="M44.500 16.500v-3h3l1.200-2h2l1.200 2h2v3z" fill="#f2f2f2" stroke="#777" stroke-width=".5"/><rect x="39" y="13.500" width="5.500" height="2.800" fill="#e6d84a"/><circle cx="30.500" cy="29" r="2.600" fill="#e8e8e8" stroke="#222" stroke-width=".9"/><circle cx="46.500" cy="29" r="2.600" fill="#e8e8e8" stroke="#222" stroke-width=".9"/><path d="M33 27.500l2 1.500-2 1.500zM49 27.500l2 1.500-2 1.500z" fill="#222"/><rect x="55.500" y="1.500" width="23" height="14" fill="#6e6e6e" stroke="#333" stroke-width=".8"/><rect x="57.500" y="3" width="14" height="9.500" fill="#e4e4e4" stroke="#444" stroke-width=".6"/><path d="M59.500 5l4 2.500 5-3M60 11l8-4" stroke="#777" stroke-width=".6" fill="none"/><path d="M57 13.800h14" stroke="#222" stroke-width="1" stroke-dasharray="1.500 1"/><path d="M70.500 15.500v7" stroke="#222" stroke-width="1.400"/></svg>
<svg class="abs" style="left:806px;top:139px;filter:blur(.4px)" width="38" height="22" viewBox="0 0 38 22"><path d="M2.500 4h18V1.500h8.500v2h4v4.500h-3v5h3.500v4h-4v2.500H20.500v-2.500h-18z" fill="#a4a4a4"/></svg>
<svg class="abs" style="left:805px;top:248.5px;filter:blur(.3px)" width="36" height="26" viewBox="0 0 36 26"><rect x=".5" y=".5" width="7.500" height="24.500" fill="#8c8c8c" stroke="#555" stroke-width=".8"/><rect x="2.800" y="2.5" width="3" height="2.600" fill="#d8d8d8" stroke="#555" stroke-width=".5"/><rect x="2.800" y="7.1" width="3" height="2.600" fill="#d8d8d8" stroke="#555" stroke-width=".5"/><rect x="2.800" y="11.7" width="3" height="2.600" fill="#d8d8d8" stroke="#555" stroke-width=".5"/><rect x="2.800" y="16.3" width="3" height="2.600" fill="#d8d8d8" stroke="#555" stroke-width=".5"/><rect x="2.800" y="20.9" width="3" height="2.600" fill="#d8d8d8" stroke="#555" stroke-width=".5"/><rect x="9.500" y="2" width="25.500" height="21" rx="1" fill="#5c5c5c"/><rect x="11.500" y="5.500" width="21.500" height="14" fill="#d9d9d9"/><rect x="11.5" y="2.700" width="2.600" height="2" fill="#ddd"/><rect x="11.5" y="20.200" width="2.600" height="2" fill="#ddd"/><rect x="16" y="2.700" width="2.600" height="2" fill="#ddd"/><rect x="16" y="20.200" width="2.600" height="2" fill="#ddd"/><rect x="20.5" y="2.700" width="2.600" height="2" fill="#ddd"/><rect x="20.5" y="20.200" width="2.600" height="2" fill="#ddd"/><rect x="25" y="2.700" width="2.600" height="2" fill="#ddd"/><rect x="25" y="20.200" width="2.600" height="2" fill="#ddd"/><rect x="29.5" y="2.700" width="2.600" height="2" fill="#ddd"/><rect x="29.5" y="20.200" width="2.600" height="2" fill="#ddd"/></svg>
<svg class="abs" style="left:805px;top:309px;" width="44" height="32" viewBox="0 0 44 32"><path d="M1 1.500h31.500v28.500H1" fill="none" stroke="#35c845" stroke-width="2.600"/><path d="M32 1h2.500l2.500 3v3l3 2.500v2.500l2.500 2v3.500l-2.500 2v2.500l-3 2.500v3l-2.500 3H32z" fill="#4fe060" stroke="#2eb83e" stroke-width=".8"/><path d="M33 4v23" stroke="#b8f5c0" stroke-width="1.500"/><path d="M8 5.500h14l6 5v10l-6 5H8l-6-5v-10z" fill="#fdfdfd" stroke="#c4c4c4" stroke-width="1.200"/><path d="M8 10h14M15 10v12.500" stroke="#0a0a0a" stroke-width="3.600" fill="none"/></svg>
<svg class="abs" style="left:794px;top:359px;" width="60" height="40" viewBox="0 0 60 40"><path d="M1.500 12.400L4 8L19.800 1.500L23.300 3.600L28 1.800L32 3.600L36.500 1.800L40 3.600L43.500 2.200L57.600 13.200L58.600 37.600L55 37L43.500 28.200H8.400L6.300 23.800L19.800 21.700L23.300 18.500L22 14.100L17.200 12.700L4.900 15.900z" fill="#fff" stroke="#0a0a0a" stroke-width="2.300" stroke-linejoin="round"/><path d="M23.300 3.600l6.500 7.400M32 3.600l5.900 6.100M40 3.600l5.300 5.300" stroke="#0a0a0a" stroke-width="2.100" fill="none" stroke-linecap="round"/></svg>
<div class="abs mono" style="left:788.5px;top:390.5px;font-size:10.800px;letter-spacing:0">MAMA</div>
<div class="abs" style="left:150px;top:437px;width:87.5px;height:48px;background:#d6d6d6;border:1.500px solid #f8f8f8;border-right:2px solid #7a7a7a;border-bottom:2px solid #7a7a7a"></div>
<div class="abs" style="left:240px;top:437px;width:87.5px;height:48px;background:#7cbcec;border:1.500px solid #d8ecfa;border-right:2px solid #6a86a0;border-bottom:2px solid #6a86a0"></div>
<div class="abs" style="left:330px;top:437px;width:87.5px;height:48px;background:#d6d6d6;border:1.500px solid #f8f8f8;border-right:2px solid #7a7a7a;border-bottom:2px solid #7a7a7a"></div>
<div class="abs" style="left:420px;top:437px;width:87.5px;height:48px;background:#d6d6d6;border:1.500px solid #f8f8f8;border-right:2px solid #7a7a7a;border-bottom:2px solid #7a7a7a"></div>
<div class="abs" style="left:510px;top:437px;width:87.5px;height:48px;background:#d6d6d6;border:1.500px solid #f8f8f8;border-right:2px solid #7a7a7a;border-bottom:2px solid #7a7a7a"></div>
<div class="abs" style="left:600px;top:437px;width:87.5px;height:48px;background:#d6d6d6;border:1.500px solid #f8f8f8;border-right:2px solid #7a7a7a;border-bottom:2px solid #7a7a7a"></div>
<div class="abs" style="left:690px;top:437px;width:87.5px;height:48px;background:#d6d6d6;border:1.500px solid #f8f8f8;border-right:2px solid #7a7a7a;border-bottom:2px solid #7a7a7a"></div>
<div class="abs" style="left:780px;top:437px;width:87.5px;height:48px;background:#d6d6d6;border:1.500px solid #f8f8f8;border-right:2px solid #7a7a7a;border-bottom:2px solid #7a7a7a"></div>
<div class="abs mono" style="left:150px;top:454px;width:87px;text-align:center;font-weight:normal;-webkit-text-stroke:.45px #111">NS</div>
<div class="abs mono" style="left:240px;top:454.5px;width:87px;text-align:center;font-weight:normal;-webkit-text-stroke:.45px #111">NE</div>
<div class="abs mono" style="left:600px;top:447px;width:87px;text-align:center;font-weight:normal;-webkit-text-stroke:.45px #111">Selezione</div>
<div class="abs mono" style="left:600px;top:461.5px;width:87px;text-align:center;font-weight:normal;-webkit-text-stroke:.45px #111">finestra</div>
<div class="abs mono" style="left:690px;top:454px;width:87px;text-align:center;font-weight:normal;-webkit-text-stroke:.45px #111">Accettare</div>
<div class="abs mono" style="left:780px;top:454px;width:87px;text-align:center;font-weight:normal;-webkit-text-stroke:.45px #111">Annulla</div>
<svg class="abs" style="left:435px;top:443.5px;filter:blur(.3px)" width="59" height="29.5" viewBox="0 -2.500 56 28"><path d="M5.500 1.500h8l3 3h22.500v7h6v14H5.500z" fill="#838383"/><path d="M13.500 1.500h27v17H21l-3.500-4h-2z" fill="#4fd25c"/><path d="M14 4h26M15 7.500h25M16 11h24M19 14.500h21M21 17.500h19" stroke="#c8f5cc" stroke-width="1.300"/><path d="M44.500 11.500v14" stroke="#f8f8f8" stroke-width="1.600"/><circle cx="41" cy="7.500" r="10" fill="#e6f8e8" fill-opacity=".75" stroke="#111" stroke-width="1.600"/><path d="M33.300 5l5-4M33.800 10.500l11-9M35.300 14.500l13.500-10.500M39.800 16.500l10.500-8" stroke="#4fd25c" stroke-width="1.600"/><path d="M32 8.800L1.500 16.100a2 2 0 0 0 1 3.900L33 12.200z" fill="#fafafa" stroke="#222" stroke-width="1"/></svg>
<div class="abs" style="left:248px;top:479.5px;width:377px;height:5.5px;background:#f6f6f6"></div>
<div class="abs" style="left:463px;top:482.5px;width:112px;height:2.5px;background:#1b62c8;border-radius:2px 2px 0 0"></div>
<div class="abs" style="left:868px;top:0px;width:40.5px;height:485px;background:#fdfdfd"></div>
<div class="abs" style="left:868px;top:0px;width:40.5px;height:19px;background:#eceef1"></div>
<div class="abs" style="left:868px;top:64px;width:40.5px;height:1px;background:#e4e4e4"></div>
<svg class="abs" style="left:887.5px;top:4px;" width="9" height="9" viewBox="0 0 9 9"><path d="M1 1l7 7M8 1l-7 7" stroke="#888" stroke-width="1"/></svg>
<div class="abs" style="left:868px;top:25.5px;width:10px;height:14px;background:radial-gradient(circle at 20% 45%,#c9a58c 0,#b08a74 35%,#5a5f66 60%,#cfd6dc 100%);border-radius:0 7px 7px 0"></div>
<div class="abs" style="left:887.5px;top:27px;width:11.5px;height:11.5px;background:#e53a1e;border-radius:6px"></div>
<div class="abs" style="left:891px;top:30.5px;width:4.5px;height:4.5px;background:#fff;border-radius:3px"></div>
<div class="abs mono" style="left:871px;top:143.5px;font-family:'Liberation Sans',sans-serif;font-size:8.500px;font-weight:normal;color:#555">bos</div>
<div class="abs mono" style="left:870px;top:178.5px;font-family:'Liberation Sans',sans-serif;font-size:8.500px;font-weight:normal;color:#555">a</div>
<div class="abs mono" style="left:869px;top:70px;font-family:'Liberation Sans',sans-serif;font-size:8.500px;font-weight:normal;color:#777">t</div>
<div class="abs" style="left:904px;top:221px;width:4px;height:151px;background:#dcdcdc"></div>
<div class="abs" style="left:908.5px;top:0px;width:51.5px;height:485px;background:#04070a"></div>
<div class="abs" style="left:908.5px;top:106.5px;width:51.5px;height:30px;background:#34383b"></div>
<div class="abs" style="left:957.5px;top:79px;width:2px;height:25px;background:#5c94d0"></div>
<div class="abs" style="left:957.5px;top:107px;width:2px;height:29px;background:#5c94d0"></div>
<div class="abs" style="left:957.5px;top:140px;width:2px;height:26px;background:#5c94d0"></div>
<div class="abs" style="left:957.5px;top:170px;width:2px;height:26px;background:#5c94d0"></div>
<div class="abs" style="left:957.5px;top:199px;width:2px;height:26px;background:#5c94d0"></div>
<div class="abs" style="left:957.5px;top:229px;width:2px;height:26px;background:#5c94d0"></div>
<svg class="abs" style="left:926.5px;top:6px;" width="14" height="13" viewBox="0 0 14 13"><path d="M.5 2.300L5.700 1.500v4.700H.5zM6.600 1.400L13.500.4v5.800H6.600zM.5 7h5.200v4.700L.5 10.900zM6.600 7h6.900v5.800l-6.900-1z" fill="#f2f2f2"/></svg>
<svg class="abs" style="left:926px;top:30px;" width="15" height="15" viewBox="0 0 15 15"><circle cx="9.300" cy="5.700" r="3.900" fill="none" stroke="#eee" stroke-width="1.300"/><path d="M6.500 8.500L1.500 13.500" stroke="#eee" stroke-width="1.400"/></svg>
<svg class="abs" style="left:925px;top:57px;" width="17" height="13" viewBox="0 0 17 13"><rect x="4" y="1.500" width="9" height="10" rx="1" fill="none" stroke="#eee" stroke-width="1.200"/><path d="M2.500 3.500H1v6h1.500M14.500 3.500H16v6h-1.500" fill="none" stroke="#eee" stroke-width="1.100"/></svg>
<svg class="abs" style="left:924.5px;top:85px;" width="18" height="15" viewBox="0 0 18 15"><rect x="6" y="1" width="11" height="13" fill="#f4f6fa"/><path d="M9 3.500h7M9 6h7M9 8.500h7M9 11h7" stroke="#7f9fd0" stroke-width=".9"/><rect x=".5" y="2.500" width="10" height="10" fill="#2b5cad"/></svg>
<div class="abs mono" style="left:926.3px;top:85.7px;font-family:'Liberation Sans',sans-serif;font-size:7.500px;color:#fff">W</div>
<svg class="abs" style="left:925px;top:114.5px;filter:blur(.3px)" width="18" height="16" viewBox="0 0 18 16"><rect x=".5" y=".5" width="17" height="15" fill="#efefef"/><rect x=".5" y=".5" width="17" height="4" fill="#2ea84a"/><path d="M2 2.500h14" stroke="#8be09a" stroke-width="1" stroke-dasharray="1.500 1"/><rect x="1.500" y="6.500" width="15" height="4" fill="#c4c4c4"/><path d="M3 8.500h12" stroke="#777" stroke-width="1.200" stroke-dasharray="2 1"/></svg>
<svg class="abs" style="left:925px;top:143.5px;filter:blur(.25px)" width="17" height="17" viewBox="0 0 17 17"><circle cx="8.500" cy="8.500" r="8" fill="#dd4b3e"/><path d="M8.500 8.500L1.600 4.500A8 8 0 0 0 8 16.480z" fill="#22a565"/><path d="M8.500 8.500L8 16.480A8 8 0 0 0 15.900 5.500z" fill="#fbd03c"/><path d="M8.500 8.500L15.900 5.500A8 8 0 0 0 1.600 4.500z" fill="#dd4b3e"/><circle cx="8.500" cy="8.500" r="3.700" fill="#f4f4f4"/><circle cx="8.500" cy="8.500" r="2.900" fill="#4a8af4"/></svg>
<svg class="abs" style="left:925px;top:174px;filter:blur(.25px)" width="17" height="15" viewBox="0 0 17 15"><path d="M.5 1.500h5.500l1.500 1.500h9v10.500H.5z" fill="#f5d76a"/><path d="M.5 5h16v8.500H.5z" fill="#fbe58c"/><rect x="4.500" y="8" width="8" height="5.500" fill="#3f9be0"/><rect x="6.500" y="10.500" width="4" height="3" fill="#fbe58c"/></svg>
<svg class="abs" style="left:926px;top:203.5px;filter:blur(.25px)" width="15" height="15" viewBox="0 0 15 15"><rect x=".3" y=".3" width="14.400" height="14.400" rx="1.500" fill="#c8161a"/><path d="M2.500 11.500c2.500-1.500 4.500-5 5-8.500.3 3.500 2.500 6.500 5 7.500-3.500-.8-7-.5-10 1z" fill="none" stroke="#fff" stroke-width="1.100"/></svg>
<svg class="abs" style="left:927px;top:232.5px;filter:blur(.3px)" width="13" height="16" viewBox="0 0 13 16"><rect x=".5" y=".5" width="12" height="15" fill="#a8d4f0"/><rect x="2" y="2" width="9" height="3.500" fill="#e8f4fc"/><path d="M2 7.500h9M2 10h9M2 12.500h9" stroke="#e8d48a" stroke-width="1.500" stroke-dasharray="2 1.500"/></svg>
<svg class="abs" style="left:916px;top:383.5px;" width="8" height="10" viewBox="0 0 8 10"><path d="M6 1L2 5l4 4" fill="none" stroke="#eee" stroke-width="1.200"/></svg>
<svg class="abs" style="left:914px;top:398px;" width="13" height="10" viewBox="0 0 13 10"><rect x="3" y="3" width="9" height="5" fill="none" stroke="#eee" stroke-width="1"/><rect x="4" y="4" width="6" height="3" fill="#eee"/><path d="M1 2.500v3M0 3.500h3" stroke="#eee" stroke-width="1"/></svg>
<svg class="abs" style="left:932.5px;top:397.5px;" width="11" height="11" viewBox="0 0 11 11"><path d="M1.500 10A8.500 8.500 0 0 1 10 1.500M4 10a6 6 0 0 1 6-6M6.500 10A3.500 3.500 0 0 1 10 6.500" fill="none" stroke="#bbb" stroke-width="1.200"/><circle cx="9.300" cy="9.500" r="1" fill="#ddd"/></svg>
<svg class="abs" style="left:946.5px;top:397.5px;" width="13" height="11" viewBox="0 0 13 11"><path d="M1 4h2l2.500-2.500v8L3 7H1z" fill="none" stroke="#eee" stroke-width="1"/><path d="M7 3.500a3 3 0 0 1 0 4M8.800 2a5 5 0 0 1 0 7M10.600 .8a7 7 0 0 1 0 9.400" fill="none" stroke="#eee" stroke-width=".9"/></svg>
<div class="abs mono" style="left:908.5px;top:416.5px;font-family:'Liberation Sans',sans-serif;font-weight:normal;color:#f0f0f0;font-size:8.300px;width:51.500px;text-align:center;letter-spacing:-.15px">10:27</div>
<div class="abs mono" style="left:908.5px;top:427.7px;font-family:'Liberation Sans',sans-serif;font-weight:normal;color:#f0f0f0;font-size:8.300px;width:51.500px;text-align:center;letter-spacing:-.15px">martedì</div>
<div class="abs mono" style="left:908.5px;top:438.3px;font-family:'Liberation Sans',sans-serif;font-weight:normal;color:#f0f0f0;font-size:8.300px;width:51.500px;text-align:center;letter-spacing:-.15px">31/03/2020</div>
<svg class="abs" style="left:926.5px;top:462.5px;" width="16" height="15" viewBox="0 0 16 15"><path d="M1 1h10.500v7.500H6L4 10.500V8.500H1z" fill="none" stroke="#eee" stroke-width="1.200"/><path d="M3 3.500h6.500M3 5.800h6.500" stroke="#eee" stroke-width=".9"/><circle cx="11" cy="10" r="4.300" fill="#222" stroke="#bbb" stroke-width=".9"/><path d="M11 7.800v4.400M10 8.600l1-.8" stroke="#eee" stroke-width="1" fill="none"/></svg>
<div class="abs" style="left:908.5px;top:482px;width:51.5px;height:1px;background:#34373a"></div>
</div>
<div id="cam" class="abs" style="left:962px;top:243px;width:318px;height:161.500px;overflow:hidden;background:#3a171d">
<svg class="abs" style="left:0;top:0" width="318" height="161.500" viewBox="8 12 1226 623" preserveAspectRatio="none">
<defs>
<filter id="b1" x="-20%" y="-20%" width="140%" height="140%"><feGaussianBlur stdDeviation="7"/></filter>
<filter id="b2" x="-20%" y="-20%" width="140%" height="140%"><feGaussianBlur stdDeviation="14"/></filter>
<filter id="b3" x="-10%" y="-10%" width="120%" height="120%"><feGaussianBlur stdDeviation="3"/></filter>
<radialGradient id="wall" cx=".5" cy=".5" r=".75"><stop offset="0" stop-color="#4d1c24"/><stop offset=".6" stop-color="#3c161d"/><stop offset="1" stop-color="#261016"/></radialGradient>
<linearGradient id="skin" x1="0" x2="1" y1="0" y2="0"><stop offset="0" stop-color="#e2dde2"/><stop offset=".42" stop-color="#d4cdd2"/><stop offset=".62" stop-color="#b5a9ae"/><stop offset=".85" stop-color="#91858b"/><stop offset="1" stop-color="#5f5560"/></linearGradient>
<pattern id="wd" x="1086" y="104" width="18.500" height="18" patternUnits="userSpaceOnUse"><circle cx="7" cy="8" r="4.800" fill="#b9d0f4"/></pattern>
</defs>
<rect x="0" y="0" width="430" height="640" fill="url(#wall)"/>
<g filter="url(#b1)">
<rect x="945" y="0" width="110" height="640" fill="#c2c6ce"/>
<path d="M1010 0L1060 400L1100 480L1100 0z" fill="#a9aeb8"/>
<rect x="1035" y="0" width="210" height="110" fill="#50535d"/><rect x="1035" y="0" width="210" height="38" fill="#8f9299"/>
<rect x="1062" y="90" width="180" height="175" fill="#55617e"/>
</g>
<rect x="1086" y="104" width="150" height="150" fill="url(#wd)" filter="url(#b3)"/>
<g filter="url(#b1)">
<path d="M1078 258H1240V560L1095 500z" fill="#fbfdff"/>
<path d="M1040 0L1085 480L1062 470L1015 0z" fill="#7d8290"/>
</g>
<!-- hair -->
<path d="M900 150L968 150L955 370L895 440z" fill="#1a181e" filter="url(#b1)"/>
<path d="M380 0C390 120 405 240 445 330L480 300L940 280C965 200 975 100 965 0z" fill="#15161b" filter="url(#b1)"/>
<!-- neck / face -->
<g filter="url(#b1)">
<path d="M470 380L560 640H840L905 400z" fill="#8c7f86"/>
<path d="M452 150C455 90 500 48 600 38C700 28 800 32 860 50C915 70 925 140 925 210C925 300 915 380 880 470C860 540 835 600 820 640H575C545 560 500 470 465 380C445 330 448 220 452 150z" fill="url(#skin)"/>
<path d="M420 250C440 250 452 290 455 330L470 385C445 370 425 320 420 250z" fill="#cdbfc2"/>
</g>
<g filter="url(#b2)">
<ellipse cx="590" cy="160" rx="120" ry="70" fill="#f4f1f5" opacity=".8"/>
<ellipse cx="540" cy="420" rx="60" ry="90" fill="#f1edf1" opacity=".7"/>
<ellipse cx="850" cy="420" rx="60" ry="130" fill="#6e626a" opacity=".55"/>
<ellipse cx="760" cy="360" rx="35" ry="80" fill="#8d7f85" opacity=".6"/>
<ellipse cx="700" cy="620" rx="120" ry="40" fill="#a8989c" opacity=".7"/>
</g>
<!-- hair fringe over forehead -->
<path d="M400 0C405 90 420 170 440 240C450 150 470 90 530 52C640 28 790 26 880 52C915 90 925 150 928 230C955 150 968 70 962 0z" fill="#16171c" filter="url(#b1)"/>
<!-- features -->
<g filter="url(#b1)">
<path d="M486 268C530 250 580 250 628 262L626 274C580 268 530 268 490 280z" fill="#2b2226"/>
<path d="M768 256C810 240 860 236 905 244L903 256C860 252 812 256 772 270z" fill="#2b2226"/>
<ellipse cx="574" cy="300" rx="44" ry="15" fill="#4a3b3f"/>
<ellipse cx="816" cy="292" rx="44" ry="15" fill="#473a40"/>
<ellipse cx="578" cy="300" rx="17" ry="12" fill="#1e1719"/>
<ellipse cx="820" cy="292" rx="17" ry="12" fill="#1e1719"/>
<ellipse cx="705" cy="445" rx="52" ry="10" fill="#705e62"/>
<path d="M598 520C640 488 690 478 720 486C760 478 800 486 812 500L800 508C760 500 700 500 610 530z" fill="#7a6a68"/>
<ellipse cx="712" cy="545" rx="88" ry="26" fill="#b98d94"/>
<ellipse cx="700" cy="528" rx="56" ry="9" fill="#5c4046"/>
</g>
<!-- hoodie -->
<g filter="url(#b1)">
<path d="M175 660L215 545L370 485L415 395L470 385L585 660z" fill="#17151c"/>
<path d="M370 485L415 395L470 385L510 470L480 560z" fill="#241a22"/>
<path d="M815 660L895 430L955 350L1025 375L1090 480L1250 545V660z" fill="#14141b"/>
<path d="M0 596L70 590L60 660H0z" fill="#6285ad"/>
</g>
<g filter="url(#b3)">
<path d="M450 574a16 12 0 0 1 36 0L480 640H458z" fill="#d9dadf"/>
<path d="M462 582a6 5 0 0 1 12 0L472 640H464z" fill="#77787e"/>
</g>
</svg>
<div class="abs sans" style="left:8px;top:143.500px;font-size:11.900px;line-height:14px;color:#f6f6f6;letter-spacing:.1px;text-shadow:0 0 2px rgba(0,0,0,.5)">Alessandro Bosio</div>
</div>
<div class="abs" style="left:0;top:0;width:960px;height:81px;background:linear-gradient(#090909,#131313)"></div>
<div class="abs" style="left:0;top:566px;width:960px;height:82px;background:linear-gradient(#131313,#080808)"></div>
<div id="yttitle" class="abs sans" style="left:12px;top:11px;font-size:17.6px;line-height:22px;color:#eee">dkx-ioko-hag (2020-03-30 at 23:58 GMT-7)</div>
<div class="abs" style="left:16px;top:613px;width:1248px;height:2.300px;background:#3c3c3c"></div>
<div class="abs" style="left:16px;top:612.600px;width:942.500px;height:2.900px;background:#f00"></div>
<svg class="abs" style="left:28px;top:620px" width="22" height="22" viewBox="0 0 22 22"><path d="M5 4 L18 11.5 L5 19z" fill="#eee"/></svg>
<svg class="abs" style="left:68px;top:620px" width="22" height="22" viewBox="0 0 22 22"><path d="M2 8.5h4l5-4.5v15l-5-4.500h-4z" fill="#eee"/><path d="M13 6.500a5.500 5.500 0 0 1 0 10M13 3.500a8.500 8.500 0 0 1 4 14" fill="none" stroke="#eee" stroke-width="1.800"/><path d="M2 3 L19 20" stroke="#131313" stroke-width="3.500"/><path d="M3 3.500 L19.500 20" stroke="#eee" stroke-width="1.800"/></svg>
<div id="yttime" class="abs sans" style="left:102px;top:623.500px;font-size:13.2px;line-height:16px;color:#ddd">1:29:01 / 1:57:54</div>
<svg class="abs" style="left:1126px;top:620px" width="24" height="22" viewBox="0 0 24 22"><rect x="2" y="5" width="19" height="14" rx="2" fill="#e8e8e8"/><path d="M4.500 12h4M10.500 12h8M4.500 15.500h9M15.500 15.500h3" stroke="#000" stroke-width="1.600"/></svg>
<svg class="abs" style="left:1163.700px;top:621.900px" width="20" height="20" viewBox="0 0 24 24"><path fill="#e8e8e8" d="M19.430 12.980c.040-.320.070-.640.070-.980s-.030-.660-.070-.980l2.110-1.650c.190-.150.240-.420.120-.640l-2-3.460c-.120-.220-.390-.300-.610-.220l-2.490 1c-.520-.400-1.080-.730-1.690-.980l-.380-2.650C14.460 2.180 14.250 2 14 2h-4c-.250 0-.460.180-.490.420l-.380 2.650c-.610.250-1.170.590-1.690.980l-2.490-1c-.230-.090-.490 0-.610.220l-2 3.460c-.130.220-.070.490.120.640l2.110 1.650c-.040.320-.070.650-.070.980s.030.660.070.980l-2.110 1.650c-.190.150-.240.420-.120.640l2 3.460c.120.220.390.300.610.220l2.490-1c.520.400 1.080.730 1.690.980l.380 2.650c.030.240.240.420.490.420h4c.250 0 .460-.180.490-.420l.380-2.650c.610-.250 1.170-.590 1.690-.980l2.490 1c.230.090.490 0 .610-.220l2-3.460c.120-.220.070-.490-.120-.640l-2.110-1.650zM12 15.500c-1.930 0-3.500-1.570-3.500-3.500s1.570-3.500 3.500-3.500 3.500 1.570 3.500 3.500-1.570 3.500-3.500 3.500z"/></svg>
<svg class="abs" style="left:1197px;top:621px" width="26" height="22" viewBox="0 0 26 22"><rect x="3" y="4" width="20" height="14" rx="1.500" fill="none" stroke="#e8e8e8" stroke-width="2"/><rect x="12" y="10" width="8" height="5" fill="#e8e8e8"/></svg>
<svg class="abs" style="left:1235px;top:621px" width="22" height="22" viewBox="0 0 22 22"><path d="M3 8h5V3M14 3v5h5M3 14h5v5M14 19v-5h5" fill="none" stroke="#e8e8e8" stroke-width="2"/></svg>

</body>
</html>
